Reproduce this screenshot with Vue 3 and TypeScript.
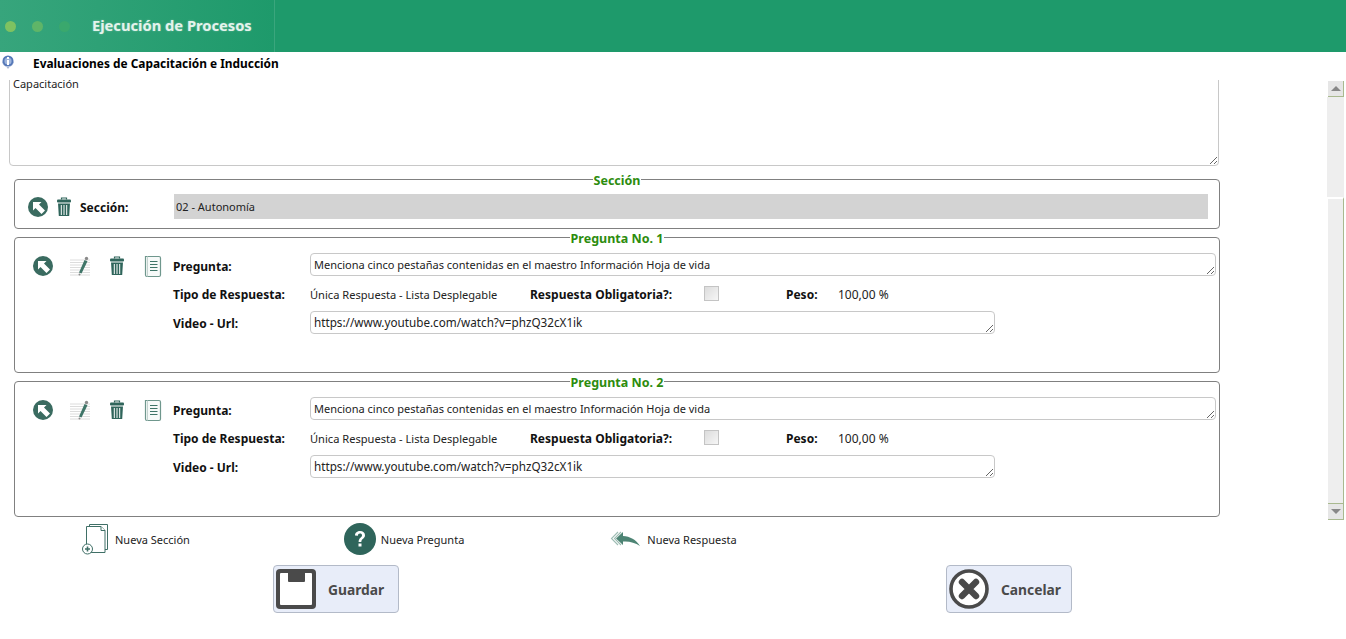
<script setup lang="ts">
interface Pregunta { numero: number }
const preguntas: Pregunta[] = [{ numero: 1 }, { numero: 2 }]
const descripcion = 'Capacitación'
const texto = 'Menciona cinco pestañas contenidas en el maestro Información Hoja de vida'
const url = 'https://www.youtube.com/watch?v=phzQ32cX1ik'
</script>

<template>
  <div class="page">
    <header class="top">
      <div class="brand">
        <div class="dots"><i class="d1"></i><i class="d2"></i><i class="d3"></i></div>
        <span class="title">Ejecución de Procesos</span>
      </div>
    </header>
    <div class="sub">
      <svg class="info" width="14" height="14" viewBox="0 0 14 14">
        <path d="M1 6 A6 6 0 0 0 13 6 L7 14Z" fill="#a9b8d6"/>
        <circle cx="7" cy="6" r="5.5" fill="#5578b8"/>
        <circle cx="7" cy="6" r="3.6" fill="#9db4dc"/>
        <rect x="6" y="5" width="2" height="5" fill="#fff"/>
        <rect x="6" y="2" width="2" height="2" fill="#fff"/>
      </svg>
      <strong>Evaluaciones de Capacitación e Inducción</strong>
    </div>
    <div class="body">
      <div class="scrollbox">
        <div class="content">
          <textarea class="desc" readonly :value="descripcion"></textarea>
          <fieldset class="seccion">
            <legend>Sección</legend>
            <div class="secrow">
              <svg class="ic" width="22" height="22" viewBox="0 0 22 22"><use href="#ir" /></svg>
              <svg class="ic trash" width="18" height="20" viewBox="0 0 18 20"><use href="#tr" /></svg>
              <b class="seclabel">Sección:</b>
              <div class="secvalue">02 - Autonomía</div>
            </div>
          </fieldset>
          <fieldset v-for="p in preguntas" :key="p.numero" class="pregunta">
            <legend>Pregunta No. {{ p.numero }}</legend>
            <div class="qbody">
              <div class="qicons">
                <svg width="22" height="22" viewBox="0 0 22 22"><use href="#ir" /></svg>
                <svg width="22" height="20" viewBox="0 0 22 20"><use href="#ed" /></svg>
                <svg width="18" height="20" viewBox="0 0 18 20"><use href="#tr" /></svg>
                <svg width="18" height="23" viewBox="0 0 18 23"><use href="#doc" /></svg>
              </div>
              <div class="qform">
                <div class="qrow r1">
                  <b class="lab">Pregunta:</b>
                  <textarea class="ta wide" readonly :value="texto"></textarea>
                </div>
                <div class="qrow r2">
                  <b class="lab">Tipo de Respuesta:</b>
                  <span class="tipo">Única Respuesta - Lista Desplegable</span>
                  <b class="oblig">Respuesta Obligatoria?:</b>
                  <span class="check"></span>
                  <b class="peso">Peso:</b>
                  <span class="pct">100,00 %</span>
                </div>
                <div class="qrow r3">
                  <b class="lab">Video - Url:</b>
                  <textarea class="ta narrow" readonly :value="url"></textarea>
                </div>
              </div>
            </div>
          </fieldset>
        </div>
        <div class="bar">
          <div class="arrow"><span class="up"></span></div>
          <div class="track"></div>
          <div class="thumb"></div>
          <div class="arrow"><span class="down"></span></div>
        </div>
      </div>
      <div class="actions">
        <div class="act a1">
          <svg width="28" height="32" viewBox="0 0 28 32" fill="#fff" stroke="#3f6f66" stroke-width="1">
            <path d="M8.5 1.5H26.5V26.5H8.5Z"/>
            <path d="M5.5 3.5H20L24 7.5V29.5H5.5Z"/>
            <path d="M20 3.5V7.5H24"/>
            <circle cx="6.5" cy="26" r="5"/>
            <path d="M6.5 23.5V28.5M4 26H9" stroke-width="1.6"/>
          </svg>
          <span>Nueva Sección</span>
        </div>
        <div class="act a2">
          <svg width="32" height="32" viewBox="0 0 32 32">
            <circle cx="16" cy="16" r="16" fill="#2f655b"/>
            <path d="M11 12.5C11 9.5 13.4 8 16 8C19 8 21 9.8 21 12.2C21 15.8 17.3 15.6 17.3 19H14.6C14.6 14.5 18 14.6 18 12.4C18 11.2 17.2 10.6 16 10.6C14.7 10.6 14 11.4 13.9 12.8Z" fill="#fff"/>
            <rect x="14.5" y="20.5" width="3" height="3" fill="#fff"/>
          </svg>
          <span>Nueva Pregunta</span>
        </div>
        <div class="act a3">
          <svg width="30" height="16" viewBox="0 0 30 16">
            <path d="M8 1L1.5 7.5L8 14M11 1L4.5 7.5L11 14" fill="none" stroke="#9dbcb3" stroke-width="1.1"/>
            <path d="M13 1L6 7.5L13 14V10.5C19 10 25 11.5 30 15C26 8.5 20 5.5 13 5Z" fill="#4d8474"/>
          </svg>
          <span>Nueva Respuesta</span>
        </div>
      </div>
      <div class="buttons">
        <button class="btn">
          <svg width="40" height="40" viewBox="0 0 40 40">
            <rect width="40" height="40" rx="4" fill="#4a4a4a"/>
            <rect x="4" y="4" width="32" height="32" rx="1" fill="#fff"/>
            <path d="M12 0H29V12A1 1 0 0 1 28 13H13A1 1 0 0 1 12 12Z" fill="#4a4a4a"/>
          </svg>
          <span>Guardar</span>
        </button>
        <button class="btn">
          <svg width="40" height="40" viewBox="0 0 40 40">
            <circle cx="20" cy="20" r="18" fill="#fff" stroke="#4a4a4a" stroke-width="3.6"/>
            <path d="M13 13L27 27M27 13L13 27" stroke="#4a4a4a" stroke-width="6.4" stroke-linecap="round"/>
          </svg>
          <span>Cancelar</span>
        </button>
      </div>
    </div>
    <svg width="0" height="0" class="defs">
      <defs>
        <g id="ir">
          <circle cx="11" cy="11" r="10" fill="#3a6b60"/>
          <path d="M6 6H14.5L12 8.5L18 14.5L14.5 18L8.5 12L6 14.5Z" fill="#fff"/>
        </g>
        <g id="tr" fill="#2f655b">
          <path d="M6.5 2.5V1H11.5V2.5" fill="none" stroke="#2f655b" stroke-width="1.2"/>
          <rect x="2" y="2.5" width="14" height="3" rx="1"/>
          <path d="M3 6.5H15L14.2 19H3.8Z"/>
          <path d="M6.3 8V18M9 8V18M11.7 8V18" stroke="#fff" stroke-width="1"/>
        </g>
        <g id="ed">
          <path d="M1 4H21M1 6.5H21M1 9H21M1 11.5H21M1 14H21M1 16.5H21M1 19H21" stroke="#dcdcdc" stroke-width="1"/>
          <path d="M15.5 4L18.5 5.2L12.5 17.5L10 16.5Z" fill="#3f7568"/>
          <circle cx="17.5" cy="2.5" r="1.7" fill="#8a8a8a"/>
          <circle cx="10.5" cy="18.5" r="1" fill="#8a8a8a"/>
        </g>
        <g id="doc" fill="none">
          <path d="M1.5 1.5H15A1.5 1.5 0 0 1 16.5 3V20A1.5 1.5 0 0 1 15 21.5H3A1.5 1.5 0 0 1 1.5 20Z" fill="#f7faf9" stroke="#6f978d" stroke-width="1.2"/>
          <path d="M3.5 1.5V21.5" stroke="#c4d3cf" stroke-width="1"/>
          <path d="M6 6.5H13.5M6 9.5H13.5M6 12.5H13.5M6 15.5H13.5" stroke="#3f7568" stroke-width="1"/>
        </g>
      </defs>
    </svg>
  </div>
</template>

<style>
html, body { margin: 0; background: #fff; }
</style>

<style scoped>
.page {
  width: 1346px;
  height: 639px;
  overflow: hidden;
  font-family: "Noto Sans", "Open Sans", sans-serif;
  font-size: 11px;
  color: #111;
  background: #fff;
}
b { font-size: 12px; }
.defs { position: absolute; }
.top {
  height: 52px;
  background: #1e9a6b;
  display: flex;
}
.brand {
  width: 274px;
  display: flex;
  align-items: center;
  border-right: 1px solid #3aa67d;
  background: linear-gradient(90deg, #37a57c 0%, #1e9a6b 100%);
}
.dots { display: flex; gap: 16px; margin-left: 5px; }
.dots i { width: 11px; height: 11px; border-radius: 50%; display: block; }
.d1 { background: #7fc261; }
.d2 { background: #5fb568; }
.d3 { background: #3aa86d; }
.title {
  margin-left: 22px;
  padding-bottom: 2px;
  font-size: 14.7px;
  font-weight: 700;
  color: #e4f3ec;
  text-shadow: 0 0 2px rgba(255, 255, 255, 0.35);
}
.sub {
  height: 28px;
  display: flex;
  align-items: flex-start;
}
.info { margin: 3px 0 0 1px; flex: none; }
.sub strong { margin-left: 18px; margin-top: 3px; font-size: 11.9px; line-height: 17px; color: #000; }
.scrollbox {
  display: flex;
  height: 440px;
  overflow: hidden;
}
.content {
  width: 1222px;
  flex: none;
  display: flex;
  flex-direction: column;
}
.desc {
  display: block;
  box-sizing: border-box;
  width: 1210px;
  height: 95px;
  margin: -9px 0 0 9px;
  padding: 4px 3px;
  border: 1px solid #c8c8c8;
  border-radius: 4px;
  font: inherit;
  line-height: 16px;
  color: #222;
  outline: none;
  flex: none;
}
fieldset {
  box-sizing: border-box;
  margin: 0 0 0 14px;
  width: 1206px;
  border: 1px solid #808080;
  border-radius: 4px;
  padding: 0;
  flex: none;
}
legend {
  margin: 0 auto;
  padding: 3px 1px 0;
  color: #2d8c0e;
  font-weight: 700;
  font-size: 12.5px;
  line-height: 14px;
}
.seccion { height: 58px; margin-top: 5px; }
.secrow { display: flex; align-items: center; height: 26px; margin-top: 5px; }
.ic { flex: none; margin-top: 2px; }
.secrow > svg:first-child { margin-left: 12px; }
.trash { margin-left: 6px; }
.seclabel { margin-left: 7px; width: 94px; flex: none; margin-top: 2px; }
.secvalue {
  width: 1034px;
  height: 25px;
  line-height: 26px;
  background: #d3d3d3;
  padding-left: 2px;
  box-sizing: border-box;
  color: #222;
}
.pregunta { height: 144px; }
.qbody { display: flex; }
.qicons {
  display: flex;
  align-items: center;
  height: 24px;
  width: 158px;
  flex: none;
  margin-top: 8px;
}
.qicons svg { flex: none; }
.qicons svg:nth-child(1) { margin-left: 17px; }
.qicons svg:nth-child(2) { margin-left: 15px; }
.qicons svg:nth-child(3) { margin-left: 17px; }
.qicons svg:nth-child(4) { margin-left: 18px; }
.qform { padding-top: 7px; }
.qrow { display: flex; align-items: center; }
.lab { width: 137px; flex: none; }
.r1 { height: 23px; }
.r1 .lab { margin-top: 4px; }
.r2 { height: 20px; margin-top: 8px; }
.r3 { height: 23px; margin-top: 7px; }
.r3 .lab { margin-top: 1px; }
.ta {
  box-sizing: border-box;
  height: 23px;
  padding: 3px;
  border: 1px solid #c8c8c8;
  border-radius: 4px;
  font: inherit;
  line-height: 15px;
  color: #222;
  outline: none;
  overflow: hidden;
}
.wide { width: 906px; }
.narrow { width: 685px; font-size: 11.7px; }
.tipo { width: 220px; flex: none; color: #222; font-size: 11.1px; }
.oblig { width: 174px; flex: none; }
.check {
  width: 13px;
  height: 13px;
  margin-top: -2px;
  border: 1px solid #c4c4c4;
  background: linear-gradient(135deg, #dcdcdc, #f6f6f6);
  flex: none;
}
.peso { margin-left: 67px; width: 52px; flex: none; }
.pct { font-size: 12px; color: #222; }
.bar {
  margin-left: 105px;
  width: 17px;
  display: flex;
  flex-direction: column;
  margin-top: 1px;
}
.arrow {
  height: 16px;
  margin-left: 1px;
  flex: none;
  background: #e6e6e6;
  border-right: 1px solid #a9b98f;
  border-bottom: 1px solid #a9b98f;
  display: flex;
  align-items: center;
  justify-content: center;
  box-sizing: border-box;
}
.up { border: 5px solid transparent; border-top: 0; border-bottom: 5px solid #888; }
.down { border: 5px solid transparent; border-bottom: 0; border-top: 5px solid #888; }
.track { height: 100px; flex: none; background: #eee; }
.thumb {
  flex: 1;
  margin-left: 1px;
  background: #eee;
  border-top: 2px solid #fff;
  border-right: 1px solid #a9b98f;
  border-bottom: 1px solid #a9b98f;
}
.actions { display: flex; height: 38px; align-items: center; }
.act { display: flex; align-items: center; color: #222; }
.a1 { margin-left: 81px; gap: 6px; }
.a2 { margin-left: 154px; gap: 5px; }
.a3 { margin-left: 146px; gap: 7px; }
.buttons { display: flex; padding-left: 273px; margin-top: 7px; gap: 547px; }
.btn {
  width: 126px;
  height: 48px;
  box-sizing: border-box;
  background: #e8edf9;
  border: 1px solid #b3bac8;
  border-radius: 4px;
  padding: 0 0 0 2px;
  display: flex;
  align-items: center;
  gap: 12px;
  font-family: inherit;
  font-size: 13.8px;
  font-weight: 700;
  color: #4a4a4a;
}
</style>
